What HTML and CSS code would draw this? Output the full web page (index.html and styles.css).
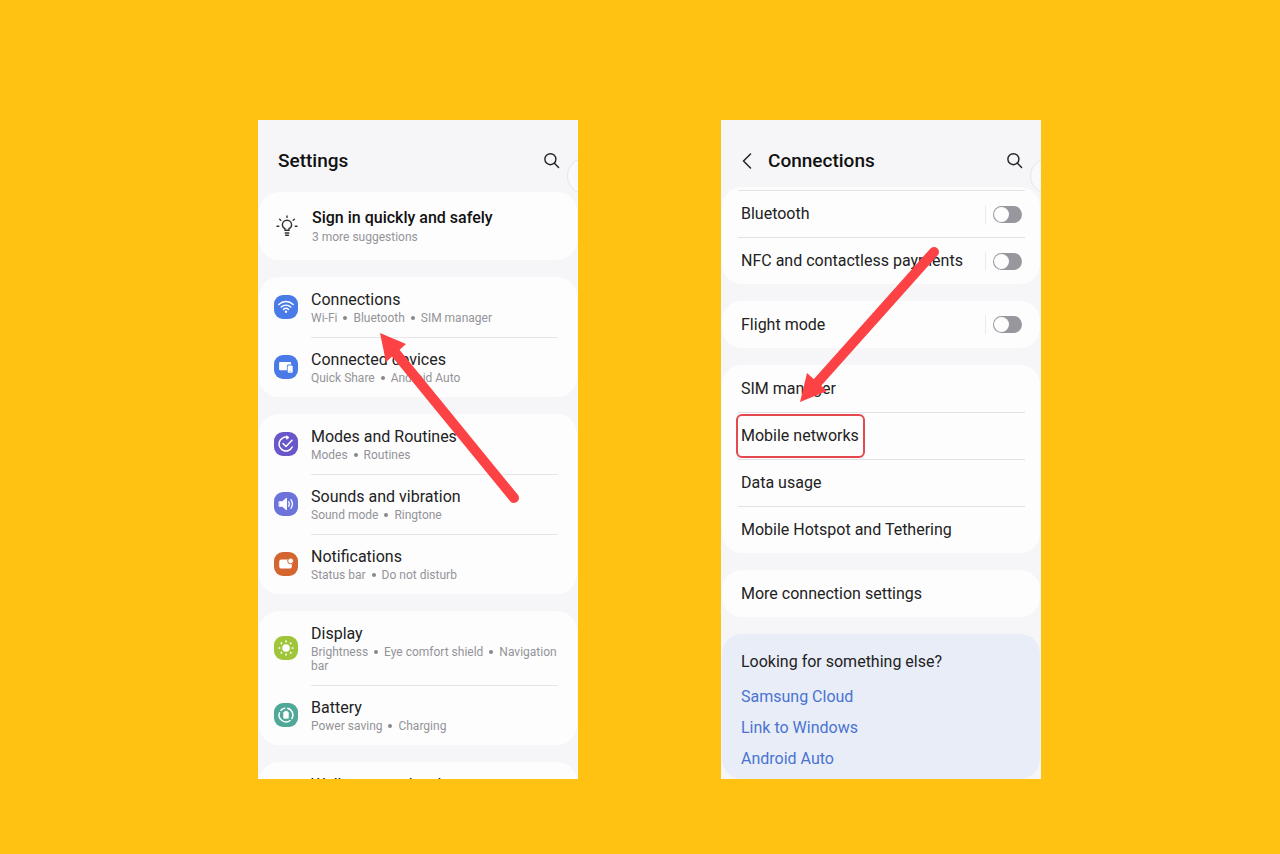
FILE: index.html
```html
<!DOCTYPE html>
<html lang="en">
<head>
  <meta charset="UTF-8">
  <meta name="viewport" content="width=device-width, initial-scale=1.0">
  <title>Settings - Connections</title>
  <link rel="stylesheet" href="styles.css">
</head>
<body>
  <main class="stage">
    <!-- Settings screen -->
    <section class="phone">
      <header class="phone-header">
        <h1>Settings</h1>
        <button class="icon-button" type="button" aria-label="Search">
          <svg width="16" height="16" viewBox="0 0 16 16" fill="none" stroke="#222" stroke-width="1.4" stroke-linecap="round"><circle cx="6.4" cy="6.2" r="5.5"/><path d="M10.4 10.2 14.6 14.4"/></svg>
        </button>
      </header>
      <div class="edge-handle"></div>

      <div class="card">
        <a class="item suggestion" href="#">
          <svg class="bulb" width="22" height="22" viewBox="0 0 22 22" fill="none" stroke="#333" stroke-width="1.4" stroke-linecap="round">
            <path d="M9 15.2v-1.5c-1.7-.8-2.6-2.2-2.6-3.9a4.6 4.6 0 0 1 9.2 0c0 1.7-.9 3.1-2.6 3.9v1.5z"/>
            <path d="M9.2 18h3.6M9.6 20.2h2.8M11 1v1.4M3.6 4.2l1.2 1M18.4 4.2l-1.2 1M1 11.3h1.8M19.2 11.3H21"/>
          </svg>
          <span class="item-text">
            <span class="item-title">Sign in quickly and safely</span>
            <span class="item-sub">3 more suggestions</span>
          </span>
        </a>
      </div>

      <div class="card">
        <a class="item" href="#">
          <svg class="app-icon blue" viewBox="0 0 24 24" fill="none" stroke="#fff" stroke-width="1.5" stroke-linecap="round">
            <path d="M4.8 9.5c4.200-3.900 10.200-3.900 14.400 0M7.200 12c2.800-2.500 6.800-2.500 9.600 0M9.500 14.400c1.500-1.300 3.500-1.300 5 0"/>
            <circle cx="12" cy="16.800" r="1.200" fill="#fff" stroke="none"/>
          </svg>
          <span class="item-text">
            <span class="item-title">Connections</span>
            <span class="item-sub">Wi-Fi <i></i> Bluetooth <i></i> SIM manager</span>
          </span>
        </a>
        <a class="item" href="#">
          <svg class="app-icon blue" viewBox="0 0 24 24" fill="#fff">
            <path d="M6.4 7h9.4c.8 0 1.3.5 1.3 1.3v1.3h-2.5c-1.100 0-1.700.7-1.700 1.700v3.900H6.400c-.8 0-1.300-.5-1.300-1.300V8.300c0-.8.5-1.300 1.300-1.300z"/>
            <rect x="13.7" y="10.4" width="5" height="7.400" rx="1.100"/>
            <path d="M15.700 16.300h1" stroke="#4a7ae8" stroke-width=".8"/>
          </svg>
          <span class="item-text">
            <span class="item-title">Connected devices</span>
            <span class="item-sub">Quick Share <i></i> Android Auto</span>
          </span>
        </a>
      </div>

      <div class="card">
        <a class="item" href="#">
          <svg class="app-icon violet" viewBox="0 0 24 24" fill="none" stroke="#fff" stroke-width="1.500" stroke-linecap="round" stroke-linejoin="round">
            <path d="M13.500 5.300A6.900 6.900 0 1 0 18.200 15M9 11.500l3 3 6-6.200"/>
            <path d="M12.600 4.300l1.800 1.200-1.600 1.200"/>
          </svg>
          <span class="item-text">
            <span class="item-title">Modes and Routines</span>
            <span class="item-sub">Modes <i></i> Routines</span>
          </span>
        </a>
        <a class="item" href="#">
          <svg class="app-icon indigo" viewBox="0 0 24 24" fill="none" stroke="#fff" stroke-width="1.300" stroke-linecap="round">
            <path d="M5.500 9.700h2.800l4.200-3.500v11.600l-4.200-3.500H5.500z" fill="#fff" stroke-linejoin="round" stroke-width="1"/>
            <path d="M14.700 9.700c.9 1.500.9 3.100 0 4.600M16.900 7.700c1.900 2.700 1.900 5.900 0 8.600"/>
          </svg>
          <span class="item-text">
            <span class="item-title">Sounds and vibration</span>
            <span class="item-sub">Sound mode <i></i> Ringtone</span>
          </span>
        </a>
        <a class="item" href="#">
          <svg class="app-icon orange" viewBox="0 0 24 24" fill="#fff">
            <rect x="5.200" y="7.600" width="12.600" height="9" rx="2.200"/>
            <circle cx="16.600" cy="8.900" r="2.900" stroke="#d4652f" stroke-width="1"/>
          </svg>
          <span class="item-text">
            <span class="item-title">Notifications</span>
            <span class="item-sub">Status bar <i></i> Do not disturb</span>
          </span>
        </a>
      </div>

      <div class="card">
        <a class="item" href="#">
          <svg class="app-icon green" viewBox="0 0 24 24" fill="none" stroke="#fff" stroke-width="1.700" stroke-linecap="round">
            <circle cx="12" cy="12" r="3.800" fill="#fff" stroke="none"/>
            <path d="M12 5.200v.4M12 18.400v.4M5.200 12h.4M18.400 12h.4M7.200 7.200l.3.3M16.500 16.500l.3.3M7.200 16.800l.3-.3M16.500 7.500l.3-.3"/>
          </svg>
          <span class="item-text">
            <span class="item-title">Display</span>
            <span class="item-sub">Brightness <i></i> Eye comfort shield <i></i> Navigation bar</span>
          </span>
        </a>
        <a class="item" href="#">
          <svg class="app-icon teal" viewBox="0 0 24 24" fill="none" stroke="#fff" stroke-width="1.500">
            <path d="M13.200 5.200a6.900 6.900 0 0 1 4.400 10.800M16.500 17.200A6.900 6.900 0 0 1 5.700 9.200M6.500 7.800A6.900 6.900 0 0 1 11.300 5.100"/>
            <path d="M10.800 8.300h2.400v1h1.100v5.900H9.700V9.300h1.100z" fill="#fff" stroke-width=".8" stroke-linejoin="round"/>
          </svg>
          <span class="item-text">
            <span class="item-title">Battery</span>
            <span class="item-sub">Power saving <i></i> Charging</span>
          </span>
        </a>
      </div>

      <div class="card">
        <a class="item" href="#">
          <span class="app-icon"></span>
          <span class="item-text">
            <span class="item-title">Wallpaper and style</span>
          </span>
        </a>
      </div>

      <svg class="arrow arrow-left" width="144" height="174" viewBox="0 0 144 174">
        <path d="M16 19 136 166" stroke="#fc4245" stroke-width="10" stroke-linecap="round"/>
        <path d="M2 1 28 12 8 30z" fill="#fc4245"/>
      </svg>
    </section>

    <!-- Connections screen -->
    <section class="phone">
      <header class="phone-header compact">
        <button class="icon-button back" type="button" aria-label="Back">
          <svg width="12" height="16" viewBox="0 0 12 16" fill="none" stroke="#222" stroke-width="1.5" stroke-linecap="round" stroke-linejoin="round"><path d="M9.500 1 2.500 8l7 7"/></svg>
        </button>
        <h1>Connections</h1>
        <button class="icon-button" type="button" aria-label="Search">
          <svg width="16" height="16" viewBox="0 0 16 16" fill="none" stroke="#222" stroke-width="1.4" stroke-linecap="round"><circle cx="6.4" cy="6.2" r="5.5"/><path d="M10.4 10.2 14.6 14.4"/></svg>
        </button>
      </header>
      <div class="edge-handle"></div>

      <div class="card scrolled">
        <div class="row">
          <label for="bluetooth">Bluetooth</label>
          <span class="switch-box"><input class="switch" type="checkbox" id="bluetooth"></span>
        </div>
        <div class="row">
          <label for="nfc">NFC and contactless payments</label>
          <span class="switch-box"><input class="switch" type="checkbox" id="nfc"></span>
        </div>
      </div>

      <div class="card">
        <div class="row">
          <label for="flight">Flight mode</label>
          <span class="switch-box"><input class="switch" type="checkbox" id="flight"></span>
        </div>
      </div>

      <div class="card">
        <a class="row" href="#">SIM manager</a>
        <a class="row" href="#"><span class="highlight">Mobile networks</span></a>
        <a class="row" href="#">Data usage</a>
        <a class="row" href="#">Mobile Hotspot and Tethering</a>
      </div>

      <div class="card">
        <a class="row" href="#">More connection settings</a>
      </div>

      <div class="card related">
        <h2>Looking for something else?</h2>
        <a href="#">Samsung Cloud</a>
        <a href="#">Link to Windows</a>
        <a href="#">Android Auto</a>
      </div>

      <svg class="arrow arrow-right" width="144" height="160" viewBox="0 0 144 160">
        <path d="M135 7 18 138" stroke="#fc4245" stroke-width="10" stroke-linecap="round"/>
        <path d="M1 157 8 128 28 146z" fill="#fc4245"/>
      </svg>
    </section>
  </main>
</body>
</html>
```
FILE: styles.css
```css
* {
  box-sizing: border-box;
}

body {
  margin: 0;
  background: #ffc213;
  font-family: Roboto, "Noto Sans", sans-serif;
  font-size: 16px;
  line-height: 20px;
  color: #222;
}

a {
  color: inherit;
  text-decoration: none;
}

.stage {
  display: flex;
  justify-content: center;
  gap: 143px;
  height: 100vh;
  padding: 120px 0 75px 19px;
}

.phone {
  position: relative;
  flex: 0 1 320px;
  overflow: hidden;
  background: #f6f6f8;
}

.phone-header {
  display: flex;
  align-items: center;
  height: 72px;
  padding: 9px 18px 0 20px;
}

.phone-header.compact {
  height: 67px;
  padding-top: 14px;
}

.phone-header h1 {
  flex: 1;
  margin: 0;
  font-size: 19px;
  line-height: 24px;
  font-weight: 500;
  color: #111;
}

.icon-button {
  display: flex;
  padding: 0;
  border: 0;
  background: none;
}

.icon-button.back {
  width: 27px;
}

/* edge panel handle, half outside the screen */
.edge-handle {
  position: absolute;
  top: 38px;
  right: -25px;
  width: 36px;
  height: 36px;
  border: 1px solid #e6e6ea;
  border-radius: 50%;
  background: #f9f9fb;
}

.card {
  margin: 0 1px 17px;
  border-radius: 20px;
  background: #fdfdfe;
}

/* Settings list */
.item {
  display: flex;
  align-items: center;
  gap: 13px;
  padding: 0 19px 0 15px;
}

.item-text {
  flex: 1;
  padding: 13px 0 12px;
}

.item + .item .item-text {
  padding-top: 12px;
  border-top: 1px solid #e6e6e9;
}

.item-title,
.item-sub {
  display: block;
}

.item-sub {
  margin-top: 1px;
  font-size: 12px;
  line-height: 14px;
  color: #949498;
}

.item-sub i {
  display: inline-block;
  width: 4px;
  height: 4px;
  margin: 0 3px 2px;
  border-radius: 50%;
  background: #88888c;
}

.app-icon {
  width: 24px;
  height: 24px;
  border-radius: 9px;
}

.blue { background: #4a7ae8; }
.violet { background: #6857c8; }
.indigo { background: #6c74dc; }
.orange { background: #d4652f; }
.green { background: #9fc63b; }
.teal { background: #50a898; }

.suggestion {
  gap: 14px;
  padding-left: 17px;
}

.suggestion .item-text {
  padding: 16px 0;
}

.suggestion .item-title {
  font-weight: 500;
  color: #111;
}

.suggestion .item-sub {
  margin-top: 2px;
}

/* Connections list */
.row {
  display: flex;
  align-items: center;
  justify-content: space-between;
  height: 47px;
  margin: 0 15px 0 16px;
  padding: 0 3px;
}

.row + .row,
.scrolled .row {
  border-top: 1px solid #e2e2e5;
}

.scrolled {
  padding-top: 3px;
}

.switch-box {
  display: flex;
  padding: 1px 0 1px 7px;
  border-left: 1px solid #ebebee;
}

.switch {
  appearance: none;
  display: flex;
  width: 29px;
  height: 17px;
  margin: 0;
  padding: 1px;
  border-radius: 9px;
  background: #98979d;
}

.switch::before {
  content: "";
  width: 15px;
  height: 15px;
  border-radius: 50%;
  background: #fdfdfe;
}

.switch:checked {
  justify-content: flex-end;
  background: #4a7ae8;
}

.highlight {
  position: relative;
}

.highlight::after {
  content: "";
  position: absolute;
  inset: -12px -6px -12px -5px;
  border: 2px solid #e4494f;
  border-radius: 6px;
}

.related {
  display: flex;
  flex-direction: column;
  align-items: flex-start;
  gap: 11px;
  margin-bottom: 0;
  padding: 18px 19px 10px;
  background: #e9edf8;
}

.related h2 {
  margin: 0 0 4px;
  font-size: 16px;
  font-weight: 400;
}

.related a {
  color: #4a74d0;
}

/* Callout arrows */
.arrow {
  position: absolute;
  pointer-events: none;
}

.arrow-left {
  top: 212px;
  left: 120px;
}

.arrow-right {
  top: 125px;
  left: 78px;
}
```
